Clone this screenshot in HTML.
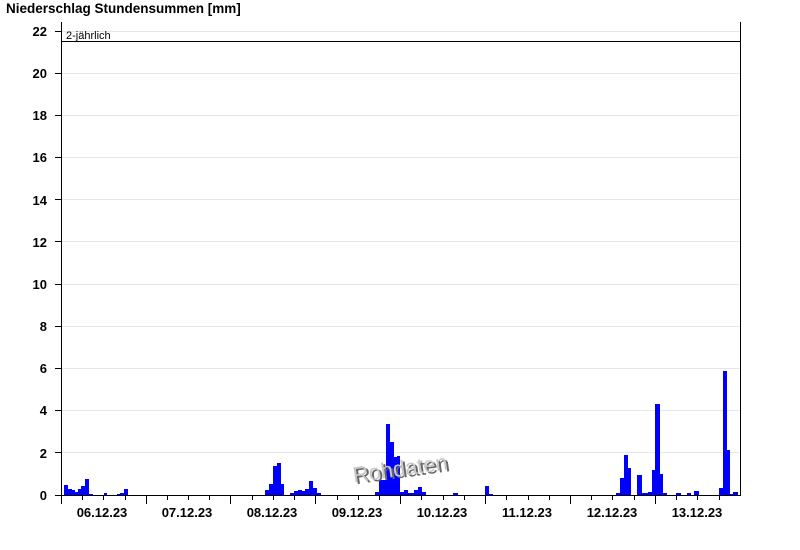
<!DOCTYPE html>
<html><head><meta charset="utf-8"><style>
html,body{margin:0;padding:0;background:#fff;}
svg{display:block;font-family:"Liberation Sans",Arial,sans-serif;}
</style></head><body>
<svg width="800" height="550" viewBox="0 0 800 550" xmlns="http://www.w3.org/2000/svg">
<text x="6" y="13" font-size="13.5" font-weight="bold" fill="#000">Niederschlag Stundensummen [mm]</text>
<g stroke="#e6e6e6" stroke-width="1">
<line x1="62" y1="452.5" x2="740" y2="452.5"/><line x1="62" y1="410.5" x2="740" y2="410.5"/>
<line x1="62" y1="368.5" x2="740" y2="368.5"/><line x1="62" y1="326.5" x2="740" y2="326.5"/>
<line x1="62" y1="284.5" x2="740" y2="284.5"/><line x1="62" y1="241.5" x2="740" y2="241.5"/>
<line x1="62" y1="199.5" x2="740" y2="199.5"/><line x1="62" y1="157.5" x2="740" y2="157.5"/>
<line x1="62" y1="115.5" x2="740" y2="115.5"/><line x1="62" y1="73.5" x2="740" y2="73.5"/>
<line x1="62" y1="31.5" x2="740" y2="31.5"/>
</g>
<g fill="#0000ff">
<rect x="64" y="485" width="4" height="10"/><rect x="68" y="489" width="4" height="6"/><rect x="72" y="490" width="3" height="5"/><rect x="75" y="492" width="3" height="3"/><rect x="78" y="489" width="3" height="6"/><rect x="81" y="486" width="4" height="9"/><rect x="85" y="479" width="4" height="16"/><rect x="89" y="494" width="4" height="1"/><rect x="104" y="493" width="3" height="2"/><rect x="117" y="494" width="3" height="1"/><rect x="120" y="493" width="4" height="2"/><rect x="124" y="489" width="4" height="6"/>
<rect x="265" y="490" width="4" height="5"/><rect x="269" y="484" width="4" height="11"/><rect x="273" y="466" width="4" height="29"/><rect x="277" y="463" width="4" height="32"/><rect x="281" y="484" width="3" height="11"/><rect x="290" y="493" width="4" height="2"/><rect x="294" y="491" width="4" height="4"/><rect x="298" y="490" width="4" height="5"/><rect x="302" y="491" width="3" height="4"/><rect x="305" y="489" width="4" height="6"/><rect x="309" y="481" width="4" height="14"/><rect x="313" y="488" width="4" height="7"/><rect x="317" y="493" width="4" height="2"/>
<rect x="375" y="492" width="4" height="3"/><rect x="379" y="480" width="4" height="15"/><rect x="383" y="480" width="3" height="15"/><rect x="386" y="424" width="4" height="71"/><rect x="390" y="442" width="4" height="53"/><rect x="394" y="457" width="3" height="38"/><rect x="397" y="456" width="3" height="39"/><rect x="400" y="492" width="4" height="3"/><rect x="404" y="490" width="4" height="5"/><rect x="408" y="493" width="6" height="2"/><rect x="414" y="490" width="4" height="5"/><rect x="418" y="487" width="4" height="8"/><rect x="422" y="492" width="4" height="3"/><rect x="453" y="493" width="5" height="2"/><rect x="485" y="486" width="4" height="9"/><rect x="489" y="494" width="4" height="1"/>
<rect x="616" y="493" width="4" height="2"/><rect x="620" y="478" width="4" height="17"/><rect x="624" y="455" width="4" height="40"/><rect x="628" y="468" width="3" height="27"/><rect x="637" y="475" width="5" height="20"/><rect x="642" y="493" width="6" height="2"/><rect x="648" y="492" width="4" height="3"/><rect x="652" y="470" width="3" height="25"/><rect x="655" y="404" width="5" height="91"/><rect x="660" y="474" width="3" height="21"/><rect x="663" y="493" width="4" height="2"/><rect x="676" y="493" width="5" height="2"/><rect x="687" y="493" width="4" height="2"/><rect x="694" y="491" width="5" height="4"/><rect x="719" y="488" width="4" height="7"/><rect x="723" y="371" width="4" height="124"/><rect x="727" y="450" width="3" height="45"/><rect x="730" y="494" width="3" height="1"/><rect x="733" y="492" width="5" height="3"/>
</g>
<line x1="62" y1="41.5" x2="740" y2="41.5" stroke="#000" stroke-width="1"/>
<text x="66" y="39" font-size="11" fill="#000">2-jährlich</text>
<g stroke="#000" stroke-width="1">
<line x1="61.5" y1="22" x2="61.5" y2="496"/>
<line x1="740.5" y1="22" x2="740.5" y2="496"/>
<line x1="61" y1="495.5" x2="741" y2="495.5"/>
<line x1="55" y1="495.5" x2="61" y2="495.5"/><line x1="55" y1="452.5" x2="61" y2="452.5"/><line x1="55" y1="410.5" x2="61" y2="410.5"/><line x1="55" y1="368.5" x2="61" y2="368.5"/><line x1="55" y1="326.5" x2="61" y2="326.5"/><line x1="55" y1="284.5" x2="61" y2="284.5"/><line x1="55" y1="241.5" x2="61" y2="241.5"/><line x1="55" y1="199.5" x2="61" y2="199.5"/><line x1="55" y1="157.5" x2="61" y2="157.5"/><line x1="55" y1="115.5" x2="61" y2="115.5"/><line x1="55" y1="73.5" x2="61" y2="73.5"/><line x1="55" y1="31.5" x2="61" y2="31.5"/>
</g>
<g stroke="#000" stroke-width="1">
<line x1="61.5" y1="495" x2="61.5" y2="504"/><line x1="146.5" y1="495" x2="146.5" y2="504"/><line x1="230.5" y1="495" x2="230.5" y2="504"/><line x1="315.5" y1="495" x2="315.5" y2="504"/><line x1="400.5" y1="495" x2="400.5" y2="504"/><line x1="485.5" y1="495" x2="485.5" y2="504"/><line x1="570.5" y1="495" x2="570.5" y2="504"/><line x1="655.5" y1="495" x2="655.5" y2="504"/>
<line x1="82.5" y1="495" x2="82.5" y2="500"/><line x1="103.5" y1="495" x2="103.5" y2="500"/><line x1="125.5" y1="495" x2="125.5" y2="500"/>
<line x1="167.5" y1="495" x2="167.5" y2="500"/><line x1="188.5" y1="495" x2="188.5" y2="500"/><line x1="209.5" y1="495" x2="209.5" y2="500"/>
<line x1="252.5" y1="495" x2="252.5" y2="500"/><line x1="273.5" y1="495" x2="273.5" y2="500"/><line x1="294.5" y1="495" x2="294.5" y2="500"/>
<line x1="337.5" y1="495" x2="337.5" y2="500"/><line x1="358.5" y1="495" x2="358.5" y2="500"/><line x1="379.5" y1="495" x2="379.5" y2="500"/>
<line x1="421.5" y1="495" x2="421.5" y2="500"/><line x1="443.5" y1="495" x2="443.5" y2="500"/><line x1="464.5" y1="495" x2="464.5" y2="500"/>
<line x1="506.5" y1="495" x2="506.5" y2="500"/><line x1="528.5" y1="495" x2="528.5" y2="500"/><line x1="549.5" y1="495" x2="549.5" y2="500"/>
<line x1="591.5" y1="495" x2="591.5" y2="500"/><line x1="612.5" y1="495" x2="612.5" y2="500"/><line x1="634.5" y1="495" x2="634.5" y2="500"/>
<line x1="676.5" y1="495" x2="676.5" y2="500"/><line x1="697.5" y1="495" x2="697.5" y2="500"/><line x1="719.5" y1="495" x2="719.5" y2="500"/>
</g>
<g font-size="13" font-weight="bold" fill="#000" text-anchor="end">
<text x="47" y="500">0</text><text x="47" y="458">2</text><text x="47" y="415">4</text><text x="47" y="373">6</text><text x="47" y="331">8</text><text x="47" y="289">10</text><text x="47" y="247">12</text><text x="47" y="205">14</text><text x="47" y="162">16</text><text x="47" y="120">18</text><text x="47" y="78">20</text><text x="47" y="36">22</text>
</g>
<g font-size="13" font-weight="bold" fill="#000" text-anchor="middle">
<text x="102" y="517">06.12.23</text><text x="187" y="517">07.12.23</text><text x="272" y="517">08.12.23</text><text x="357" y="517">09.12.23</text><text x="442" y="517">10.12.23</text><text x="527" y="517">11.12.23</text><text x="612" y="517">12.12.23</text><text x="697" y="517">13.12.23</text>
</g>
<g transform="rotate(-8 400 468)" font-size="22" text-anchor="middle">
<text x="402" y="478" fill="#666">Rohdaten</text>
<text x="400" y="476" fill="#c8c8c8">Rohdaten</text>
</g>
</svg>
</body></html>
